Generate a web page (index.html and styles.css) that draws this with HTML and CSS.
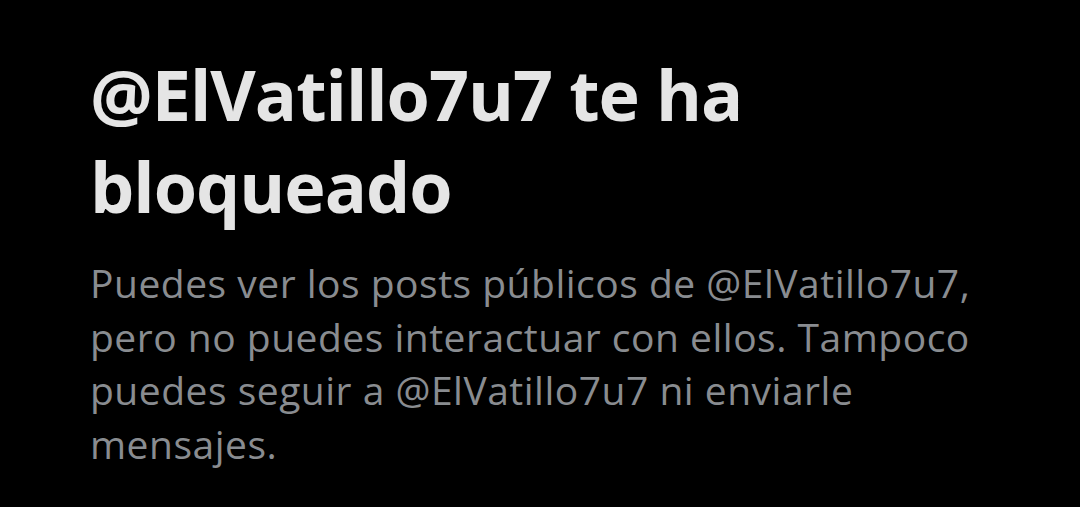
FILE: index.html
```html
<!DOCTYPE html>
<html lang="es">
<head>
  <meta charset="UTF-8">
  <title>Bloqueado</title>
  <link rel="stylesheet" href="styles.css">
</head>
<body>
  <div class="notice">
    <h1 class="notice-title">@ElVatillo7u7 te ha bloqueado</h1>
    <p class="notice-text">Puedes ver los posts públicos de @ElVatillo7u7, pero no puedes interactuar con ellos. Tampoco puedes seguir a @ElVatillo7u7 ni enviarle mensajes.</p>
  </div>
</body>
</html>
```

FILE: styles.css
```css
html, body {
  margin: 0;
  background: #000;
}
body {
  font-family: 'Open Sans', 'Liberation Sans', sans-serif;
  height: 507px;
  overflow: hidden;
}
.notice {
  width: 905px;
  padding: 48px 0 0 90px;
}
.notice-title {
  margin: 0 0 24px;
  font-size: 70px;
  line-height: 92px;
  font-weight: 700;
  letter-spacing: -1px;
  color: #e5e5e5;
}
.notice-text {
  margin: 0;
  font-size: 39px;
  line-height: 53.5px;
  letter-spacing: 0.5px;
  color: #898c90;
}
```
